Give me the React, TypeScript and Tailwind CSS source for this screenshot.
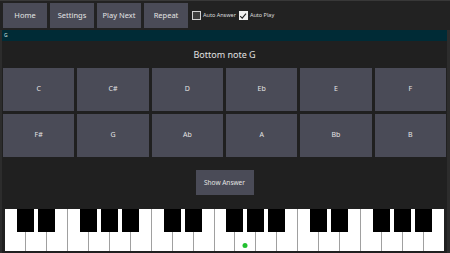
import React from "react";

const notes = ["C", "C#", "D", "Eb", "E", "F", "F#", "G", "Ab", "A", "Bb", "B"];

function Piano() {
  const whiteCount = 21;
  const w = 439 / whiteCount;
  const blackAfter = [0, 1, 3, 4, 5];
  const blacks: number[] = [];
  for (let o = 0; o < 3; o++) {
    for (const b of blackAfter) blacks.push(o * 7 + b + 1);
  }
  return (
    <div className="relative w-[439px] h-[42px] flex bg-white">
      {Array.from({ length: whiteCount }).map((_, i) => (
        <div
          key={i}
          className={`flex-1 h-full bg-white relative ${i > 0 ? "border-l border-[#a0a0a0]" : ""}`}
        >
          {i === 11 && (
            <div className="absolute left-1/2 -translate-x-1/2 bottom-[3px] w-[5px] h-[5px] rounded-full bg-[#22c030]" />
          )}
        </div>
      ))}
      {blacks.map((b) => (
        <div
          key={b}
          className="absolute top-0 h-[23px] w-[17px] bg-black"
          style={{ left: b * w - 8.5 }}
        />
      ))}
    </div>
  );
}

export default function App() {
  return (
    <div
      className="w-[450px] h-[253px] bg-[#202020] flex flex-col overflow-hidden"
      style={{ fontFamily: '"Noto Sans", "Open Sans", sans-serif' }}
    >
      <div className="h-[30px] shrink-0 bg-[#222222] border-t border-[#383838] flex items-start pt-[2px] pl-[3px] gap-[3px]">
        {["Home", "Settings", "Play Next", "Repeat"].map((t) => (
          <div
            key={t}
            className="w-[44px] h-[25px] bg-[#4a4b57] flex items-center justify-center text-[7.5px] text-[#e4e4e4]"
          >
            {t}
          </div>
        ))}
        <div className="flex items-center h-[25px] ml-[1px] gap-[2px]">
          <div className="w-[9px] h-[9px] border border-[#d0d0d0] bg-[#3c3c3c]" />
          <span className="text-[5.5px] text-[#dddddd] leading-none">Auto Answer</span>
        </div>
        <div className="flex items-center h-[25px] gap-[2px]">
          <div className="w-[9px] h-[9px] bg-[#f0f0f0] flex items-center justify-center">
            <svg width="8" height="8" viewBox="0 0 8 8">
              <path d="M1.2 4.2 L3.2 6.2 L7 1.6" stroke="#222" strokeWidth="1.1" fill="none" />
            </svg>
          </div>
          <span className="text-[5.5px] text-[#dddddd] leading-none">Auto Play</span>
        </div>
      </div>
      <div className="flex-1 flex flex-col border-l-2 border-r-[3px] border-[#2c2c2c]">
        <div className="h-[11px] shrink-0 bg-[#002b36] flex items-center pl-[2px]">
          <span className="text-[5px] text-[#cfe0e0] leading-none">G</span>
        </div>
        <div className="h-[27px] shrink-0 flex items-center justify-center text-[9px] text-[#e0e0e0]">
          Bottom note G
        </div>
        <div className="grid grid-cols-6 gap-[3px] px-[1px]">
          {notes.map((n) => (
            <div
              key={n}
              className="h-[43px] bg-[#4a4b57] flex items-center justify-center text-[7px] text-[#e4e4e4]"
            >
              {n}
            </div>
          ))}
        </div>
        <div className="flex justify-center mt-[13px]">
          <div className="w-[58px] h-[25px] bg-[#4a4b57] flex items-center justify-center text-[6.5px] text-[#e4e4e4]">
            Show Answer
          </div>
        </div>
        <div className="mt-[14px] pl-[3px]">
          <Piano />
        </div>
      </div>
    </div>
  );
}
